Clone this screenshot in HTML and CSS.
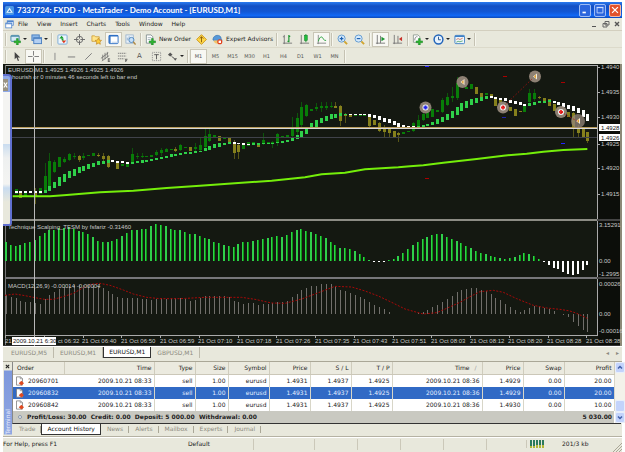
FILE: index.html
```html
<!DOCTYPE html>
<html lang="en">
<head>
<meta charset="utf-8">
<title>MetaTrader - Demo Account</title>
<link rel="stylesheet" href="styles.css">
</head>
<body>
<svg class="defs" aria-hidden="true">
  <symbol id="plus" viewBox="0 0 12 12"><path d="M7 5h2v2.500h2.500v2H9V12H7V9.500H4.500v-2H7z" fill="#2fb52f" stroke="#0e7a1c" stroke-width=".5"/></symbol>
  <symbol id="i-new" viewBox="0 0 12 12"><rect x="1" y="1.500" width="9" height="6.500" rx="1" fill="#d5e9f5" stroke="#4385a5"/><path d="M1 2.500h9" stroke="#4385a5"/><use href="#plus"/></symbol>
  <symbol id="i-prof" viewBox="0 0 12 12"><rect x="1" y="1" width="8" height="6" fill="#8db8e8" stroke="#4a7fc0"/><rect x="3" y="4" width="8.500" height="6.500" fill="#b4d0f2" stroke="#4a7fc0"/><path d="M3 5h8.500" stroke="#4a7fc0"/></symbol>
  <symbol id="i-market" viewBox="0 0 12 12"><rect x="1" y="1" width="10" height="10" rx="1" fill="#eef6fd" stroke="#77a9d6"/><path d="M2.500 5L5 2l2.500 3z" fill="#19a02e"/><path d="M5 7h5L7.500 10z" fill="#e03a20"/><path d="M5 5l2 2" stroke="#19a02e" stroke-width="1.500"/></symbol>
  <symbol id="i-target" viewBox="0 0 12 12"><circle cx="6" cy="6" r="3.500" fill="none" stroke="#666"/><path d="M6 0v5M6 7v5M0 6h5M7 6h5" stroke="#666"/></symbol>
  <symbol id="i-nav" viewBox="0 0 12 12"><path d="M1 2h3l1 1h4v5H1z" fill="#ffe58a" stroke="#c9962b" stroke-width=".8"/><path d="M8 4.500l1.100 2.200 2.400.3-1.800 1.700.5 2.500L8 10l-2.200 1.200.5-2.500L4.500 7l2.400-.3z" fill="#ffcf3a" stroke="#bd8420" stroke-width=".7"/></symbol>
  <symbol id="i-term" viewBox="0 0 12 12"><rect x="1" y="1.500" width="10" height="9" rx="1" fill="#fff" stroke="#2d6fc4"/><path d="M1 2h10M2 2v8" stroke="#2d6fc4" stroke-width="1.600"/><path d="M4 9h6" stroke="#b7cbe6"/></symbol>
  <symbol id="i-test" viewBox="0 0 12 12"><rect x="1" y="1" width="8" height="9" fill="#e9f1f9" stroke="#8facc9" stroke-width=".8"/><path d="M2.500 7V4M4.500 6V2.500" stroke="#8facc9"/><circle cx="7" cy="6.500" r="2.800" fill="#c7e0f7" stroke="#4c86bd"/><path d="M9 8.500l2.500 3" stroke="#b08a45" stroke-width="1.500"/></symbol>
  <symbol id="i-order" viewBox="0 0 12 12"><path d="M1.500 1h5l2 2v7h-7z" fill="#fff" stroke="#6c7b80" stroke-width=".8"/><path d="M3 4h4M3 6h3" stroke="#8fa0a8" stroke-width=".8"/><use href="#plus"/></symbol>
  <symbol id="i-diamond" viewBox="0 0 12 12"><path d="M6 .7L11.300 6 6 11.300.7 6z" fill="#ffd84a" stroke="#cc9412"/><path d="M6 3v6M4 5l2-2 2 2" stroke="#8a5b08" fill="none"/></symbol>
  <symbol id="i-expert" viewBox="0 0 12 12"><path d="M1 6.500C1 0 10 0 10 5l1 2H2z" fill="#5899d8" stroke="#2d6aa8" stroke-width=".6"/><path d="M2 7h7v1c0 3-6 4-7 0z" fill="#f3c66c"/><circle cx="8.500" cy="8.500" r="2.800" fill="#e2401c"/><rect x="7.200" y="7.200" width="2.600" height="2.600" fill="#fff"/></symbol>
  <symbol id="i-bars" viewBox="0 0 12 12"><path d="M2.500 1v10M1 3h1.500M1 10h10" stroke="#777" fill="none"/><path d="M7.500 1v8M6 8h1.500M7.500 2.500H9" stroke="#1c9531" fill="none" stroke-width="1.300"/></symbol>
  <symbol id="i-candle" viewBox="0 0 12 12"><path d="M2.500 1v10M1 10h10" stroke="#777" fill="none"/><path d="M7.500 0v9" stroke="#1c9531"/><rect x="6" y="1.500" width="3" height="5.500" fill="#1fc03a" stroke="#138026" stroke-width=".6"/></symbol>
  <symbol id="i-line" viewBox="0 0 12 12"><path d="M2.500 1v10M1 10h10" stroke="#888" fill="none"/><path d="M2.500 8C4 3 6 2 7.500 4.500S9 7 11 7" stroke="#2aa23d" fill="none"/></symbol>
  <symbol id="i-zin" viewBox="0 0 12 12"><circle cx="5" cy="5" r="3.900" fill="#d6eafb" stroke="#5c97cf"/><path d="M3 5h4M5 3v4" stroke="#1f63b2" stroke-width="1.300"/><path d="M8 8l3 3" stroke="#d0a530" stroke-width="2"/></symbol>
  <symbol id="i-zout" viewBox="0 0 12 12"><circle cx="5" cy="5" r="3.900" fill="#d6eafb" stroke="#5c97cf"/><path d="M3 5h4" stroke="#1f63b2" stroke-width="1.300"/><path d="M8 8l3 3" stroke="#d0a530" stroke-width="2"/></symbol>
  <symbol id="i-scroll" viewBox="0 0 12 12"><path d="M2.500 1v10M1 10h10M6 2v8" stroke="#777" fill="none"/><path d="M7 3l4 2.500L7 8z" fill="#1c9531"/></symbol>
  <symbol id="i-shift" viewBox="0 0 12 12"><path d="M2.500 1v10M1 10h10M6.500 2v8" stroke="#777" fill="none"/><path d="M11 3L7.500 5.500 11 8z" fill="#c8322a"/></symbol>
  <symbol id="i-ind" viewBox="0 0 12 12"><path d="M1.500 1h5l2 2v6h-7z" fill="#fff" stroke="#7c8b80" stroke-width=".8"/><path d="M3 7c0-5 3-4 3-4" fill="none" stroke="#666" stroke-width=".8"/><use href="#plus"/></symbol>
  <symbol id="i-clock" viewBox="0 0 12 12"><circle cx="6" cy="6" r="4.800" fill="#e8f3fe" stroke="#2265ba" stroke-width="1.600"/><path d="M6 3v3.300h2.500" fill="none" stroke="#234f86"/></symbol>
  <symbol id="i-tpl" viewBox="0 0 12 12"><rect x="1" y="1.500" width="10.500" height="9" rx="1" fill="#eef5fc" stroke="#3d7fc5"/><path d="M1 2.500h10" stroke="#3d7fc5" stroke-width="1.500"/><path d="M2.500 6l2-1 2 1 3-1.500" fill="none" stroke="#c45a3c" stroke-width=".8"/><path d="M2.500 9l2-1 2 .5L9.500 7.500" fill="none" stroke="#3a9a50" stroke-width=".8"/></symbol>
  <symbol id="i-cursor" viewBox="0 0 12 12"><path d="M4 1v8l2-1.800L7.500 11l1.300-.6L7.300 7H10z" fill="#444"/></symbol>
  <symbol id="i-cross" viewBox="0 0 12 12"><path d="M6 0v5M6 7v5M0 6h5M7 6h5" stroke="#777"/></symbol>
  <symbol id="i-v" viewBox="0 0 12 12"><path d="M6.500 2v8" stroke="#888"/></symbol>
  <symbol id="i-h" viewBox="0 0 12 12"><path d="M2 6.500h8" stroke="#777"/></symbol>
  <symbol id="i-trend" viewBox="0 0 12 12"><path d="M2.500 9.500l7-7" stroke="#777"/></symbol>
  <symbol id="i-chan" viewBox="0 0 12 12"><path d="M1 8l8-6M2 11l8-6M3 4v6M5.500 2v7M8 1v6" stroke="#666" stroke-width=".8"/><path d="M9 8.500h2M9 10h2M9 11.500h2M9 8v4" stroke="#444" stroke-width=".7"/></symbol>
  <symbol id="i-fibo" viewBox="0 0 12 12"><path d="M1 2.500h9M1 5.500h9M1 8.500h7" stroke="#777" stroke-dasharray="1.500 .6"/><path d="M9.500 8.500v3.500M9.500 9h2M9.500 10.500H11" stroke="#444" stroke-width=".8"/></symbol>
  <symbol id="i-label" viewBox="0 0 12 12"><rect x="1.500" y="1.500" width="9" height="9" fill="none" stroke="#888" stroke-dasharray="1 1"/><path d="M3.500 4h5M6 4v5" stroke="#555"/></symbol>
  <symbol id="i-arrows" viewBox="0 0 12 12"><path d="M1 4l2.500-2.500L6 4 3.500 6z" fill="#555"/><path d="M5 6l3 2" stroke="#555"/><path d="M7 8h4L9 10.500z" fill="#555"/></symbol>
  <symbol id="i-doc" viewBox="0 0 12 12"><path d="M2 .5h5.500L10 3v8.500H2z" fill="#fff" stroke="#777"/><path d="M7 .5V3h3" fill="none" stroke="#777" stroke-width=".8"/><path d="M8.500 5.500L12 9l-3.500 3L5 9z" fill="#e04a20"/></symbol>
  <symbol id="i-win" viewBox="0 0 12 12"><rect x="3" y="1" width="8" height="6" fill="#e4effc" stroke="#4a82cc"/><rect x="1" y="4" width="8" height="6.500" fill="#fff" stroke="#4a82cc"/><path d="M1 5h8M3 2h8" stroke="#4a82cc" stroke-width="1.300"/></symbol>
</svg>

<div class="window">
  <header class="titlebar">
    <svg class="ico" viewBox="0 0 12 12"><rect width="12" height="12" rx="2" fill="#4b97e6"/><path d="M6 2l4.500 7h-9z" fill="#e8f6ff"/><path d="M6 5l2 3H4z" fill="#3b83d0"/></svg>
    <h1>7337724: FXDD - MetaTrader - Demo Account - [EURUSD,M1]</h1>
    <button class="wb" aria-label="Minimize"><svg viewBox="0 0 12 12"><path d="M3 9h4" stroke="#fff" stroke-width="2"/></svg></button>
    <button class="wb" aria-label="Maximize"><svg viewBox="0 0 12 12"><path d="M2.500 3h7v6.500h-7z" fill="none" stroke="#cfe0ff"/><path d="M2 3h8" stroke="#cfe0ff" stroke-width="1.500"/></svg></button>
    <button class="wb close" aria-label="Close"><svg viewBox="0 0 12 12"><path d="M2.500 2.500l7 7M9.500 2.500l-7 7" stroke="#fff" stroke-width="1.500"/></svg></button>
  </header>

  <nav class="menubar">
    <svg class="ico"><use href="#i-win"/></svg>
    <button>File</button><button>View</button><button>Insert</button><button>Charts</button><button>Tools</button><button>Window</button><button>Help</button>
    <span class="mdi">
      <button aria-label="Minimize chart"><svg viewBox="0 0 8 8"><path d="M1 6.500h4" stroke="#555"/></svg></button>
      <button aria-label="Restore chart"><svg viewBox="0 0 8 8"><path d="M3 1.500h4V5H3zM1 3.500h4V7H1z" fill="none" stroke="#666"/></svg></button>
      <button aria-label="Close chart"><svg viewBox="0 0 8 8"><path d="M2 2l4 4M6 2L2 6" stroke="#555" stroke-width="1.400"/></svg></button>
    </span>
  </nav>

  <div class="toolbar main">
    <i class="grip"></i>
    <button class="drop" aria-label="New chart"><svg><use href="#i-new"/></svg></button>
    <button class="drop" aria-label="Profiles"><svg><use href="#i-prof"/></svg></button>
    <i class="grip"></i>
    <button aria-label="Market watch"><svg><use href="#i-market"/></svg></button>
    <button aria-label="Data window"><svg><use href="#i-target"/></svg></button>
    <button aria-label="Navigator"><svg><use href="#i-nav"/></svg></button>
    <button class="on" aria-label="Terminal"><svg><use href="#i-term"/></svg></button>
    <button aria-label="Strategy tester"><svg><use href="#i-test"/></svg></button>
    <i class="grip"></i>
    <button class="wide"><svg><use href="#i-order"/></svg>New Order</button>
    <button aria-label="MetaEditor"><svg><use href="#i-diamond"/></svg></button>
    <button class="wide"><svg><use href="#i-expert"/></svg>Expert Advisors</button>
    <i class="grip"></i>
    <button aria-label="Bar chart"><svg><use href="#i-bars"/></svg></button>
    <button aria-label="Candlesticks"><svg><use href="#i-candle"/></svg></button>
    <button class="on" aria-label="Line chart"><svg><use href="#i-line"/></svg></button>
    <i class="grip"></i>
    <button aria-label="Zoom in"><svg><use href="#i-zin"/></svg></button>
    <button aria-label="Zoom out"><svg><use href="#i-zout"/></svg></button>
    <i class="grip"></i>
    <button class="on" aria-label="Auto scroll"><svg><use href="#i-scroll"/></svg></button>
    <button aria-label="Chart shift"><svg><use href="#i-shift"/></svg></button>
    <i class="grip"></i>
    <button class="drop" aria-label="Indicators"><svg><use href="#i-ind"/></svg></button>
    <button class="drop" aria-label="Periods"><svg><use href="#i-clock"/></svg></button>
    <button class="drop" aria-label="Templates"><svg><use href="#i-tpl"/></svg></button>
    <i class="grip"></i>
  </div>

  <div class="toolbar">
    <i class="grip"></i>
    <button aria-label="Cursor"><svg><use href="#i-cursor"/></svg></button>
    <button class="on" aria-label="Crosshair"><svg><use href="#i-cross"/></svg></button>
    <i class="grip"></i>
    <button aria-label="Vertical line"><svg><use href="#i-v"/></svg></button>
    <button aria-label="Horizontal line"><svg><use href="#i-h"/></svg></button>
    <button aria-label="Trendline"><svg><use href="#i-trend"/></svg></button>
    <button aria-label="Channel"><svg><use href="#i-chan"/></svg></button>
    <button aria-label="Fibonacci"><svg><use href="#i-fibo"/></svg></button>
    <button class="letter">A</button>
    <button aria-label="Text label"><svg><use href="#i-label"/></svg></button>
    <button class="drop" aria-label="Arrows"><svg><use href="#i-arrows"/></svg></button>
    <i class="grip"></i>
    <button class="on">M1</button><button>M5</button><button>M15</button><button>M30</button><button>H1</button><button>H4</button><button>D1</button><button>W1</button><button>MN</button>
    <i class="grip"></i>
  </div>

  <main class="chart">
    <svg id="plot" viewBox="3 64 619 282" role="img" aria-label="EURUSD M1 chart"></svg>
    <aside class="dock"><button aria-label="Close panel"><svg viewBox="0 0 6 8"><path d="M1 1l4 6M5 1L1 7" stroke="#fff" stroke-width="1.500"/></svg></button></aside>
  </main>

  <div class="charttabs">
    <button>EURUSD,M5</button><button>EURUSD,M1</button><button class="active">EURUSD,M1</button><button>GBPUSD,M1</button>
    <span class="pager"><button aria-label="Previous">◂</button><button aria-label="Next">▸</button></span>
  </div>

  <section class="terminal">
    <div class="side"><button aria-label="Close terminal"><svg viewBox="0 0 6 6"><path d="M1 1l4 4M5 1L1 5" stroke="#222" stroke-width="1.300"/></svg></button><span>Terminal</span></div>
    <div class="body">
      <div class="grid">
        <table>
          <colgroup><col class="c-order"><col class="c-time"><col class="c-n"><col class="c-size"><col class="c-n"><col class="c-n"><col class="c-n"><col class="c-n"><col class="c-time"><col class="c-n"><col class="c-n"><col class="c-profit"></colgroup>
          <thead><tr><th>Order</th><th>Time</th><th>Type</th><th>Size</th><th>Symbol</th><th>Price</th><th>S / L</th><th>T / P</th><th>Time <span class="sort">∕</span></th><th>Price</th><th>Swap</th><th>Profit</th></tr></thead>
          <tbody>
            <tr><td><svg><use href="#i-doc"/></svg>20960701</td><td>2009.10.21 08:33</td><td>sell</td><td>1.00</td><td>eurusd</td><td>1.4931</td><td>1.4937</td><td>1.4925</td><td>2009.10.21 08:36</td><td>1.4929</td><td>0.00</td><td>20.00</td></tr>
            <tr class="sel"><td><svg><use href="#i-doc"/></svg>20960832</td><td>2009.10.21 08:33</td><td>sell</td><td>1.00</td><td>eurusd</td><td>1.4931</td><td>1.4937</td><td>1.4925</td><td>2009.10.21 08:36</td><td>1.4929</td><td>0.00</td><td>20.00</td></tr>
            <tr><td><svg><use href="#i-doc"/></svg>20960842</td><td>2009.10.21 08:33</td><td>sell</td><td>1.00</td><td>eurusd</td><td>1.4931</td><td>1.4937</td><td>1.4925</td><td>2009.10.21 08:36</td><td>1.4930</td><td>0.00</td><td>10.00</td></tr>
          </tbody>
          <tfoot><tr><td colspan="11"><i class="dot"></i>Profit/Loss: 30.00&nbsp; Credit: 0.00&nbsp; Deposit: 5 000.00&nbsp; Withdrawal: 0.00</td><td>5 030.00</td></tr></tfoot>
        </table>
        <div class="scroll">
          <button aria-label="Scroll up"><svg viewBox="0 0 8 8"><path d="M2 5l2-2 2 2" fill="none" stroke="#405fa8" stroke-width="1.500"/></svg></button>
          <i class="thumb"></i>
          <button aria-label="Scroll down"><svg viewBox="0 0 8 8"><path d="M2 3l2 2 2-2" fill="none" stroke="#405fa8" stroke-width="1.500"/></svg></button>
        </div>
      </div>
      <div class="tabs"><button>Trade</button><button class="active">Account History</button><button>News</button><button>Alerts</button><button>Mailbox</button><button>Experts</button><button>Journal</button></div>
    </div>
  </section>

  <footer class="status">
    <span class="help">For Help, press F1</span><span class="profile">Default</span><i></i><i></i><i></i><i></i><i></i><i></i>
    <span class="net"><svg viewBox="0 0 15 8"><path d="M0 4h15" stroke="#2c7a5c" stroke-width="8" stroke-dasharray="2 1"/><path d="M0 7h15M6 6h9" stroke="#b3b637" stroke-width="2" stroke-dasharray="2 1"/></svg>201/3 kb</span>
    <svg class="resize" viewBox="0 0 9 9"><path d="M0 9l9-9M3 9l6-6M6 9l3-3" stroke="#aaa797"/></svg>
  </footer>
</div>
<div class="taskbar"><i class="start"></i><i class="mid"></i><i class="task"></i><i class="tray"></i></div>
<script src="chart.js"></script>
</body>
</html>
```
FILE: styles.css
```css
* { box-sizing: border-box; }
body {
  margin: 0;
  padding-top: 2px;
  background: #fff;
  color: #222;
  font: 6px/8px "DejaVu Sans", "Liberation Sans", sans-serif;
  overflow: hidden;
}
button {
  border: 0;
  margin: 0;
  padding: 0;
  background: none;
  color: inherit;
  font: inherit;
  white-space: nowrap;
}
svg { display: block; flex: none; }
.defs { display: none; }
.window { margin: 0 3px; background: #e8e8dc; }

.titlebar {
  display: flex;
  align-items: center;
  gap: 3px;
  height: 16px;
  padding: 0 1px 0 2px;
  background: linear-gradient(#2a7bf0, #1450c4 25%, #1257d4 60%, #1168f5 85%, #0d49b8);
  color: #fff;
}
.titlebar h1 {
  flex: 1;
  margin: 0;
  font: bold 8px/12px Lato, "Liberation Sans", sans-serif;
  white-space: nowrap;
}
.ico { width: 9px; height: 9px; }
.wb {
  width: 12px;
  height: 13px;
  border: 1px solid #9dbcf5;
  border-radius: 2px;
  background: #2c66dd;
}
.wb svg { width: 10px; height: 10px; }
.close { background: #e2532c; border-color: #f3b9a5; }

.menubar { display: flex; align-items: center; gap: 9px; height: 13px; padding: 0 0 0 2px; border-bottom: 1px solid #d3cfbf; }
.menubar .ico { margin-right: -5px; }
.mdi { display: flex; gap: 3px; margin-left: auto; padding-right: 1px; }
.mdi svg { width: 8px; height: 8px; }

.toolbar { display: flex; align-items: center; height: 16px; padding-left: 1px; font-size: 5px; color: #555; }
.toolbar.main { font-size: 6px; color: #222; height: 17px; border-bottom: 1px solid #dcdacb; }
.toolbar button { display: flex; align-items: center; justify-content: center; width: 17px; height: 15px; }
.toolbar button svg { width: 11px; height: 11px; }
.toolbar .on { border: 1px solid #c9c6b6; background: #f8f8f3; }
.toolbar .drop { width: 21px; gap: 2px; }
.toolbar .drop::after { content: ""; border: 2px solid transparent; border-top-color: #222; border-bottom: 0; }
.toolbar .wide { width: auto; gap: 3px; padding: 0 2px; }
.toolbar .letter { font-size: 7px; }
.grip { width: 2px; height: 13px; margin: 0 1px; border-left: 1px solid #c5c2b3; border-right: 1px solid #f6f6ee; }

.chart { position: relative; background: #141811; }
.chart > svg { width: 100%; height: auto; }
.chart text { font: 6px "Liberation Sans", sans-serif; fill: #c8c8c8; }
.chart .boxed { fill: #111; }
.dock {
  position: absolute;
  left: 0;
  top: 10px;
  width: 9px;
  height: 152px;
  border: solid #6070d0;
  border-width: 2px 2px 2px 0;
  border-radius: 0 4px 3px 0;
  background: linear-gradient(#8fa9e8 16px, #f4f4f2 16px, #f4f4f2 68px, #c9dcf0 68px, #eef0f0 82px, #f4f4f2 108px, #c9dcf0 112px, #e8e8dc 126px);
}
.dock button { display: block; width: 5px; height: 12px; margin-top: 3px; background: #9a9384; }
.dock svg { width: 5px; height: 8px; }

.charttabs { display: flex; height: 13px; padding-left: 2px; border-top: 1px solid #fff; color: #8c8a80; }
.charttabs > button { height: 11px; padding: 0 6px; border-right: 1px solid #bdbaab; }
.charttabs > .active { border: 1px solid #333; border-top: 0; padding: 0 5px; background: #fff; color: #111; }
.pager { display: flex; gap: 7px; margin-left: auto; padding-right: 3px; }

.terminal { display: flex; margin-top: 2px; padding-right: 1px; border-top: 1px solid #aaa797; }
.side { display: flex; flex-direction: column; align-items: center; width: 9px; }
.side button { padding: 2px 0; }
.side button svg { width: 5px; height: 5px; }
.side span {
  flex: 1;
  width: 8px;
  writing-mode: vertical-rl;
  transform: rotate(180deg);
  background: linear-gradient(#8fa7e2, #7e98dc);
  color: #eef3ff;
}
.body { flex: 1; min-width: 0; }
.grid { display: flex; border-left: 1px solid #888; border-bottom: 1px solid #333; }
table { flex: 1; width: 100%; border-collapse: collapse; table-layout: fixed; background: #fff; }
.c-order { width: 51px; } .c-time { width: 90px; } .c-n { width: 41px; } .c-size { width: 33px; } .c-profit { width: 50px; }
th, td { height: 12px; padding: 0 2px; border-right: 1px solid #d8d6c8; font-weight: normal; line-height: 8px; text-align: right; white-space: nowrap; vertical-align: middle; }
th { background: #ebeadf; border-bottom: 1px solid #cbc7b8; border-right-color: #cfccbd; }
th:first-child { padding-left: 4px; text-align: left; }
tbody td:first-child { display: flex; align-items: center; gap: 4px; border-right: 0; }
tbody svg { width: 9px; height: 10px; }
.sort { padding: 0 3px; color: #999; }
.sel { background: #316ac5; color: #e6efff; }
tfoot td { height: 12px; border: 0; background: #c9c9c1; font-weight: bold; }
tfoot td:first-child { text-align: left; }
.dot { display: inline-block; width: 4px; height: 4px; margin: 0 5px 0 3px; border: 1px solid #8796ac; border-radius: 2px; background: #eee; }
.scroll { display: flex; flex-direction: column; width: 10px; background: #f3f2ea; }
.scroll button, .thumb { border: 1px solid #e8effc; border-radius: 2px; background: #c3d3fb; }
.scroll svg { width: 8px; height: 9px; }
.thumb { height: 12px; margin-top: auto; }
.tabs { display: flex; height: 11px; padding-left: 1px; color: #8c8a80; }
.tabs button { position: relative; padding: 0 6px; }
.tabs button:not(.active)::after { content: ""; position: absolute; right: 0; top: 2px; height: 7px; border-right: 1px solid #aaa797; }
.tabs .active { border: 1px solid #333; border-top: 0; padding: 0 5px; background: #fff; color: #111; }

.status { display: flex; align-items: center; height: 16px; margin-top: 1px; border-top: 1px solid #b5b2a3; box-shadow: inset 0 1px #fff; }
.help { flex: 0 0 185px; }
.profile { flex: 0 0 65px; }
.status i { width: 43px; height: 11px; border-left: 1px solid #cbc8b9; }
.status i:nth-of-type(1) { width: 61px; }
.status i:nth-of-type(6) { width: 40px; }
.net { display: flex; align-items: center; gap: 17px; padding-left: 3px; border-left: 1px solid #cbc8b9; }
.net svg { width: 15px; height: 8px; }
.resize { width: 9px; height: 9px; margin-left: auto; align-self: flex-end; }

.taskbar { display: flex; height: 4px; margin: 0 3px; }
.start { flex: 56; background: #3c9a3c; }
.mid { flex: 393; background: #2f7de0; }
.task { flex: 95; background: #a08068; }
.tray { flex: 75; background: #20a0ee; }
```
FILE: chart.js
```js
const svg = document.getElementById("plot");
const el = (name, attrs, text) => {
  const n = document.createElementNS("http://www.w3.org/2000/svg", name);
  for (const k in attrs) n.setAttribute(k, attrs[k]);
  if (text) n.textContent = text;
  svg.appendChild(n);
  return n;
};
const rect = (x, y, width, height, fill) => el("rect", { x, y, width, height, fill, "shape-rendering": "crispEdges" });
const barX = i => Math.round(14.5 + 4.847 * i);

// Frame and panel separators
rect(3, 64, 619, 282, "#141811");
rect(5, 65, 593, 1, "#aaa");
rect(5, 65, 1, 281, "#777");
rect(3, 345, 619, 1, "#333");

const UP = "#087d08", DOWN = "#85801c";
// Candles: direction, body top, body bottom, wick top, wick bottom (thirds of a pixel under y = 60)
const candles = `g388-403 y395-415 g397-408 g395-400 y398-410,385-432 g385-402 g348-397,308-400 g303-380,278-385 g305-337,300-340 g290-322
g297-305,290-310 g282-300,278-303 g287-292,280-298 y288-300,285-307 g287-295,279-300 g286-289 g278-289 y284-288,280-292 y289-297,280-302 y289-320,286-325
g302-305 y308-326 g312-318 g308-320 g282-313,263-313 g287-292,278-297 g287-291,280-294 g287-290 g285-290 g275-285,270-288
g270-280,265-288 g268-277,263-277 g266-270 y268-272,262-277 g256-270,253-273 g261-265 y262-272 g262-268,250-272 g255-270,235-273 g228-262,203-268
g222-243,203-246 g225-235 y228-243 g232-236 y235-247 y252-278,240-297 y256-276,250-297 g256-267 g245-258 g246-252
y248-260 g240-253,218-256 g246-250 g247-252,244-263 g222-245,218-258 g227-231 g226-230 g205-227,170-230 g175-215,158-225 g142-195,126-200
g136-167,132-170 g146-152 g142-148,130-154 g139-143,126-155 g137-143,126-150 g137-141,126-145 y137-143,126-145 y139-183,136-197 y165-168,160-188 y165-172
g164-166 g164-166 g164-166 y168-197,165-205 y180-195 y190-212,186-216 y200-217,196-233 y205-220,200-233 y213-232 y220-226,216-247
g215-223 g212-215 g190-213,185-216 g180-198,165-202 g162-180,158-184 g150-175 g147-172 g150-156 g120-155,115-158 g110-135,98-138
g108-115,80-125 g68-115,52-120 g65-82 g82-86 g73-86 y82-102 y98-115 g98-105 y103-115 y113-138
y120-140 y135-148 y140-153 y147-167 y153-156 g135-157 g100-125,88-130 g100-118,88-122 y110-115,108-118 y114-122
y118-138 y133-152 y140-155 y147-158 y155-170 y158-205,155-233 y200-220,195-233 y205-233 y217-243,215-248`.split(/\s+/);
candles.forEach((c, i) => {
  const fill = c[0] === "g" ? UP : DOWN;
  const [body, wick] = c.slice(1).split(",").map(s => s.split("-").map(v => 60 + v / 3));
  if (wick) { const r = rect(barX(i) + 1, wick[0], 1, wick[1] - wick[0], fill); r.setAttribute("opacity", ".6"); }
  rect(barX(i), body[0], 3, Math.max(1, body[1] - body[0]), fill);
});

// Fast ribbon: [bar, top, bottom, white?], interpolated between entries
const ribbon = [[0,393,399,1],[5,392,398,1],[6,390,398],[7,378,393],[8,365,385],[9,352,377],[11,333,355],[13,322,340],[15,312,328],[17,304,316],[19,300,308],[20,300,306,1],[23,306,312,1],[24,305,313],[28,297,302],[32,283,290],[35,276,283],[38,272,277],[40,258,270],[41,252,263],[43,248,256],[44,246,251],[45,247,252,1],[48,252,256,1],[49,250,254],[53,248,252],[56,240,246],[57,235,242],[58,225,237],[59,212,235],[60,200,222],[61,188,208],[62,180,203],[63,173,190],[65,163,178],[67,160,167],[68,161,166],[69,162,166,1],[72,163,166,1],[73,163,170,1],[75,168,180,1],[77,178,190,1],[79,190,200,1],[80,196,202,1],[82,198,203,1],[83,198,204],[84,196,202],[86,185,196],[88,170,187],[90,153,175],[92,130,152],[94,118,135],[96,111,123],[97,109,117],[98,109,115,1],[101,115,123,1],[103,122,133,1],[105,131,139,1],[106,130,137],[108,123,130],[110,121,127],[111,123,130,1],[113,130,140,1],[115,138,152,1],[116,143,160,1],[117,150,172,1],[118,162,183,1]];
ribbon.forEach((a, k) => {
  const b = ribbon[k + 1] || [a[0] + 1, a[1], a[2]];
  for (let i = a[0]; i < b[0]; i++) {
    const t = (i - a[0]) / (b[0] - a[0]);
    const top = a[1] + t * (b[1] - a[1]), bot = a[2] + t * (b[2] - a[2]);
    rect(barX(i), 60 + top / 3, 3, (bot - top) / 3, a[3] ? "#fff" : "#2fd04a");
  }
});

// Price levels
rect(6, 127, 592, 1, "#b99c5c");
rect(6, 128, 592, 1, "#d8d8d8");
rect(6, 137, 592, 1, "#40424a");

// Slow average
const slow = [[38,409],[150,409],[200,405],[300,397],[400,392],[500,384],[600,377],[715,369],[815,362],[915,352],[965,343],[1035,338],[1095,328],[1195,322],[1230,319],[1270,316],[1330,308],[1430,297],[1510,287],[1580,281],[1630,275],[1690,270],[1762,267]];
el("polyline", { points: slow.map(([x, y]) => `${x / 3},${60 + y / 3}`).join(" "), fill: "none", stroke: "#74ee0a", "stroke-width": 2 });

rect(5, 219, 617, 2, "#8c8c84");
rect(5, 277, 617, 2, "#77777a");
rect(5, 335, 593, 1, "#aaa");

// Oscillator histogram
const osc = [82,90,93,90,83,80,75,64,54,46,44,39,38,36,43,47,50,57,66,77,81,80,77,72,63,55,45,46,42,41,33,28,30,33,41,46,45,50,57,58,63,70,72,80,85,90,93,95,87,82,81,78,75,72,70,66,64,66,61,52,45,43,48,52,57,62,70,82,91,99,99,103,109,117,126,135,139,142,140,136,131,123,113,102,91,82,72,66,60,58,58,65,73,78,85,93,99,109,114,117,123,127,130,131,129,126,120,115,117,124,133,142,150,158,163,170,177,180,177,165,150];
osc.forEach((v, k) => {
  const x = barX(k - 2), y = 215 + v / 3, up = v < 139;
  if (up) { rect(x, y, 2, 261 - y, "#2fd04a"); rect(x + 1, y, 1, 261 - y, k % 3 ? "#0a9a12" : "#2fd04a"); }
  else rect(x, 261, 2, Math.max(1, y - 261), "#fff");
});

// MACD histogram and signal
const macd = [240,245,250,257,260,262,265,267,253,240,232,222,217,212,210,210,210,210,212,213,220,228,237,245,250,250,250,250,252,253,255,252,250,252,250,248,249,251,257,255,248,243,242,243,243,243,246,257,261,266,264,264,269,267,267,264,262,262,257,247,237,226,220,213,213,207,207,208,213,224,228,234,240,246,252,260,269,277,282,290,297,297,296,296,296,293,290,286,277,269,262,251,243,231,225,221,219,220,226,229,237,249,256,266,276,285,290,286,280,272,274,279,282,289,297,299,306,320,332,344,350];
macd.forEach((v, k) => {
  const y = 215 + v / 3;
  rect(barX(k - 2) + 1, Math.min(y, 314), 1, Math.abs(314 - y), "#706e6a");
});
const signal = [[15,241],[45,237],[75,242],[105,248],[133,253],[160,253],[190,245],[220,235],[250,218],[270,208],[300,205],[330,211],[370,225],[400,237],[440,247],[480,251],[540,251],[615,247],[725,247],[765,253],[815,264],[855,265],[905,252],[945,237],[1005,214],[1055,216],[1095,228],[1135,243],[1175,262],[1215,282],[1240,289],[1270,297],[1310,293],[1340,280],[1380,262],[1410,245],[1440,230],[1480,226],[1510,232],[1550,251],[1600,271],[1640,279],[1680,283],[1710,288],[1730,295],[1762,310]];
el("polyline", { points: signal.map(([x, y]) => `${x / 3},${215 + y / 3}`).join(" "), fill: "none", stroke: "#a80808", "stroke-width": 1, "stroke-dasharray": "2 1.5" });

// Trades
[[427,66,"#22f"],[505,76,"#a00"],[563,82,"#a00"],[504,117,"#22a"],[563,143,"#22f"],[427,178,"#a00"]].forEach(([x, y, c]) => rect(x - 2, y, 4, 1, c));
[[425.5,107.5,"#22e",6],[462.5,82,0,6],[535,76.5,0,6],[503,107.5,"#e22",6],[561,112,"#e22",6],[578,121,0,7]].forEach(([x, y, c, r]) => {
  el("circle", { cx: x, cy: y, r, fill: "#948679", "fill-opacity": r > 6 ? .75 : .95 });
  if (c) {
    el("circle", { cx: x, cy: y, r: 3, fill: "#eee" });
    el("path", { d: `M${x - 2} ${y}h4M${x} ${y - 2}v4`, stroke: c, "stroke-width": 1.8 });
  } else {
    el("path", { d: `M${x + 2} ${y - 3}v6l-4-3z`, fill: "#f4ecdc" });
    el("path", { d: `M${x + 1} ${y - 2}v4l-2-2z`, fill: "#e0a030" });
  }
});
el("path", { d: "M503 107L533 78M561 112L577 121", stroke: "#b01010", "stroke-width": .8, "stroke-dasharray": "1.500 2" });

// Cursor line and scale
rect(34, 65, 1, 281, "#b8b8b8");
rect(598, 66, 23, 279, "#0c0e0a");
rect(597, 65, 1, 271, "#aaa");
rect(597, 219, 25, 2, "#444");
rect(597, 277, 25, 2, "#444");
rect(620, 64, 2, 282, "#8d8a78");
const label = (x, y, t, cls) => el("text", cls ? { x, y, class: cls } : { x, y }, t);
[["1.4940",69],["1.4935",94],["1.4930",119],["1.4925",146],["1.4920",170],["1.4915",196]].forEach(([t, y]) => { rect(598, y - 2, 2, 1, "#aaa"); label(601, y, t); });
[["1.4928",130],["1.4926",140]].forEach(([t, y]) => { rect(599, y - 6, 21, 7, "#fff"); label(601, y, t, "boxed"); });
[["3.15291",227],["0.00",263],["-1.2995",276],["0.00026",286],["0.00",316],["-0.00016",333]].forEach(([t, y]) => label(599, y, t));

label(8, 72, "EURUSD,M1  1.4925 1.4926 1.4925 1.4926");
label(12, 79, "hourish or 0 minutes 46 seconds left to bar end");
label(8, 229, "Technique Scalping_TESM by fsfariz -0.31460");
label(8, 288, "MACD(12,26,9) -0.00014 -0.00004");

// Time scale; the cursor's date covers the start of the second label
const times = ["06:40", "06:50", "06:59", "07:10", "07:18", "07:26", "07:35", "07:43", "07:51", "08:03", "08:12", "08:20", "08:28", "08:38"];
for (let k = 0; k < 16; k++) rect(Math.round(5 + 38.75 * k), 335, 1, 3, "#aaa");
label(5, 343, "21");
label(58, 343, "ct 06:32");
times.forEach((t, k) => label(Math.round(82 + 38.75 * k), 343, "21 Oct " + t));
rect(12, 337, 44, 8, "#fff");
label(13, 343, "2009.10.21 6:30", "boxed");
```
